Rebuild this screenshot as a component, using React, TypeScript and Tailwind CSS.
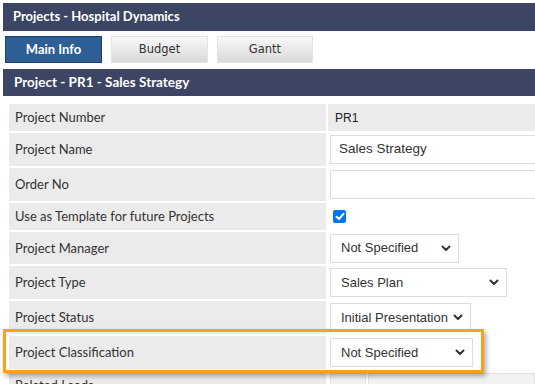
import React from "react";

const Chevron = () => (
  <svg width="10" height="7" viewBox="0 0 10 7" className="shrink-0">
    <polyline points="1.5,1.5 5,5 8.5,1.5" fill="none" stroke="#333" strokeWidth="2" strokeLinecap="round" strokeLinejoin="round" />
  </svg>
);

const Select = ({ text, w }: { text: string; w: string }) => (
  <div className={`h-[29px] ${w} shrink-0 border border-[#dcdcdc] bg-white flex items-center justify-between pl-[10px] pr-[7px] font-['Liberation_Sans',Arial,sans-serif] text-[13px] text-[#333] whitespace-nowrap`}>
    <span>{text}</span>
    <Chevron />
  </div>
);

const Row = ({ label, h, children, gray }: { label: string; h: string; children?: React.ReactNode; gray?: boolean }) => (
  <div className={`flex gap-[2px] ${h}`}>
    <div className="w-[317px] shrink-0 bg-[#ebebeb] flex items-center pl-[6px] pt-[1px] text-[13px] text-[#333]">{label}</div>
    <div className={`flex-1 flex items-center pl-[2px] ${gray ? "bg-[#ebebeb]" : "bg-white"}`}>{children}</div>
  </div>
);

export default function App() {
  return (
    <div className="w-[535px] h-[384px] overflow-hidden bg-white relative font-['Lato',sans-serif]">
      <div className="ml-[3px] mt-[3px] h-[28px] bg-[#3c4563] flex items-center pl-[10px] text-white font-bold text-[13px]">
        Projects - Hospital Dynamics
      </div>
      <div className="flex gap-[9px] ml-[5px] mt-[5px] h-[27px]">
        <div className="w-[97px] h-full bg-[#2e5e96] border border-[#1f3f6c] flex items-center justify-center text-white font-bold text-[13px]">
          Main Info
        </div>
        <div className="w-[97px] h-full bg-gradient-to-b from-[#f8f8f8] to-[#d9d9d9] border border-[#e4e4e4] flex items-center justify-center pt-[1px] text-[#333] text-[11.5px] font-['DejaVu_Sans',sans-serif]">
          Budget
        </div>
        <div className="w-[96px] h-full bg-gradient-to-b from-[#f8f8f8] to-[#d9d9d9] border border-[#e4e4e4] flex items-center justify-center pt-[1px] text-[#333] text-[11.5px] font-['DejaVu_Sans',sans-serif]">
          Gantt
        </div>
      </div>
      <div className="ml-[3px] mt-[6px] h-[27px] bg-[#3c4563] flex items-center pl-[11px] text-white font-bold text-[13.5px]">
        Project - PR1 - Sales Strategy
      </div>
      <div className="mt-[8px] ml-[9px] flex flex-col gap-[2px]">
        <Row label="Project Number" h="h-[27px]" gray>
          <span className="pl-[5px] font-['Liberation_Sans',Arial,sans-serif] text-[12px] text-[#222]">PR1</span>
        </Row>
        <Row label="Project Name" h="h-[33px]">
          <div className="h-[29px] w-[230px] shrink-0 border border-[#dcdcdc] bg-white flex items-center pl-[8px] font-['Liberation_Sans',Arial,sans-serif] text-[13.5px] text-[#333]">
            Sales Strategy
          </div>
        </Row>
        <Row label="Order No" h="h-[33px]">
          <div className="h-[29px] w-[230px] shrink-0 border border-[#dcdcdc] bg-white" />
        </Row>
        <Row label="Use as Template for future Projects" h="h-[27px]">
          <div className="ml-[3px] w-[13px] h-[13px] rounded-[2px] bg-[#0075ff] flex items-center justify-center">
            <svg width="10" height="9" viewBox="0 0 10 9">
              <polyline points="1.5,4.8 4,7 8.5,1.8" fill="none" stroke="white" strokeWidth="2" strokeLinecap="round" strokeLinejoin="round" />
            </svg>
          </div>
        </Row>
        <Row label="Project Manager" h="h-[32px]">
          <Select text="Not Specified" w="w-[129px]" />
        </Row>
        <Row label="Project Type" h="h-[33px]">
          <Select text="Sales Plan" w="w-[177px]" />
        </Row>
        <Row label="Project Status" h="h-[33px]">
          <Select text="Initial Presentation" w="w-[141px]" />
        </Row>
        <Row label="Project Classification" h="h-[33px]">
          <Select text="Not Specified" w="w-[143px]" />
        </Row>
        <div className="flex gap-[2px] h-[30px]">
          <div className="w-[317px] shrink-0 bg-[#ebebeb] flex items-start pt-[5px] pl-[6px] text-[13px] text-[#333]">Related Leads</div>
          <div className="flex-1 flex gap-[2px] pl-[2px] pt-[2px] bg-white">
            <div className="w-[36px] h-full bg-[#f2f2f2] border border-[#e2e2e2]" />
            <div className="flex-1 h-full bg-[#f2f2f2] border border-[#e2e2e2]" />
          </div>
        </div>
      </div>
      <div className="absolute left-[3px] top-[329px] w-[481px] h-[44px] border-[3px] border-[#f5a417] shadow-[2px_3px_5px_rgba(0,0,0,0.35)] pointer-events-none" />
    </div>
  );
}
